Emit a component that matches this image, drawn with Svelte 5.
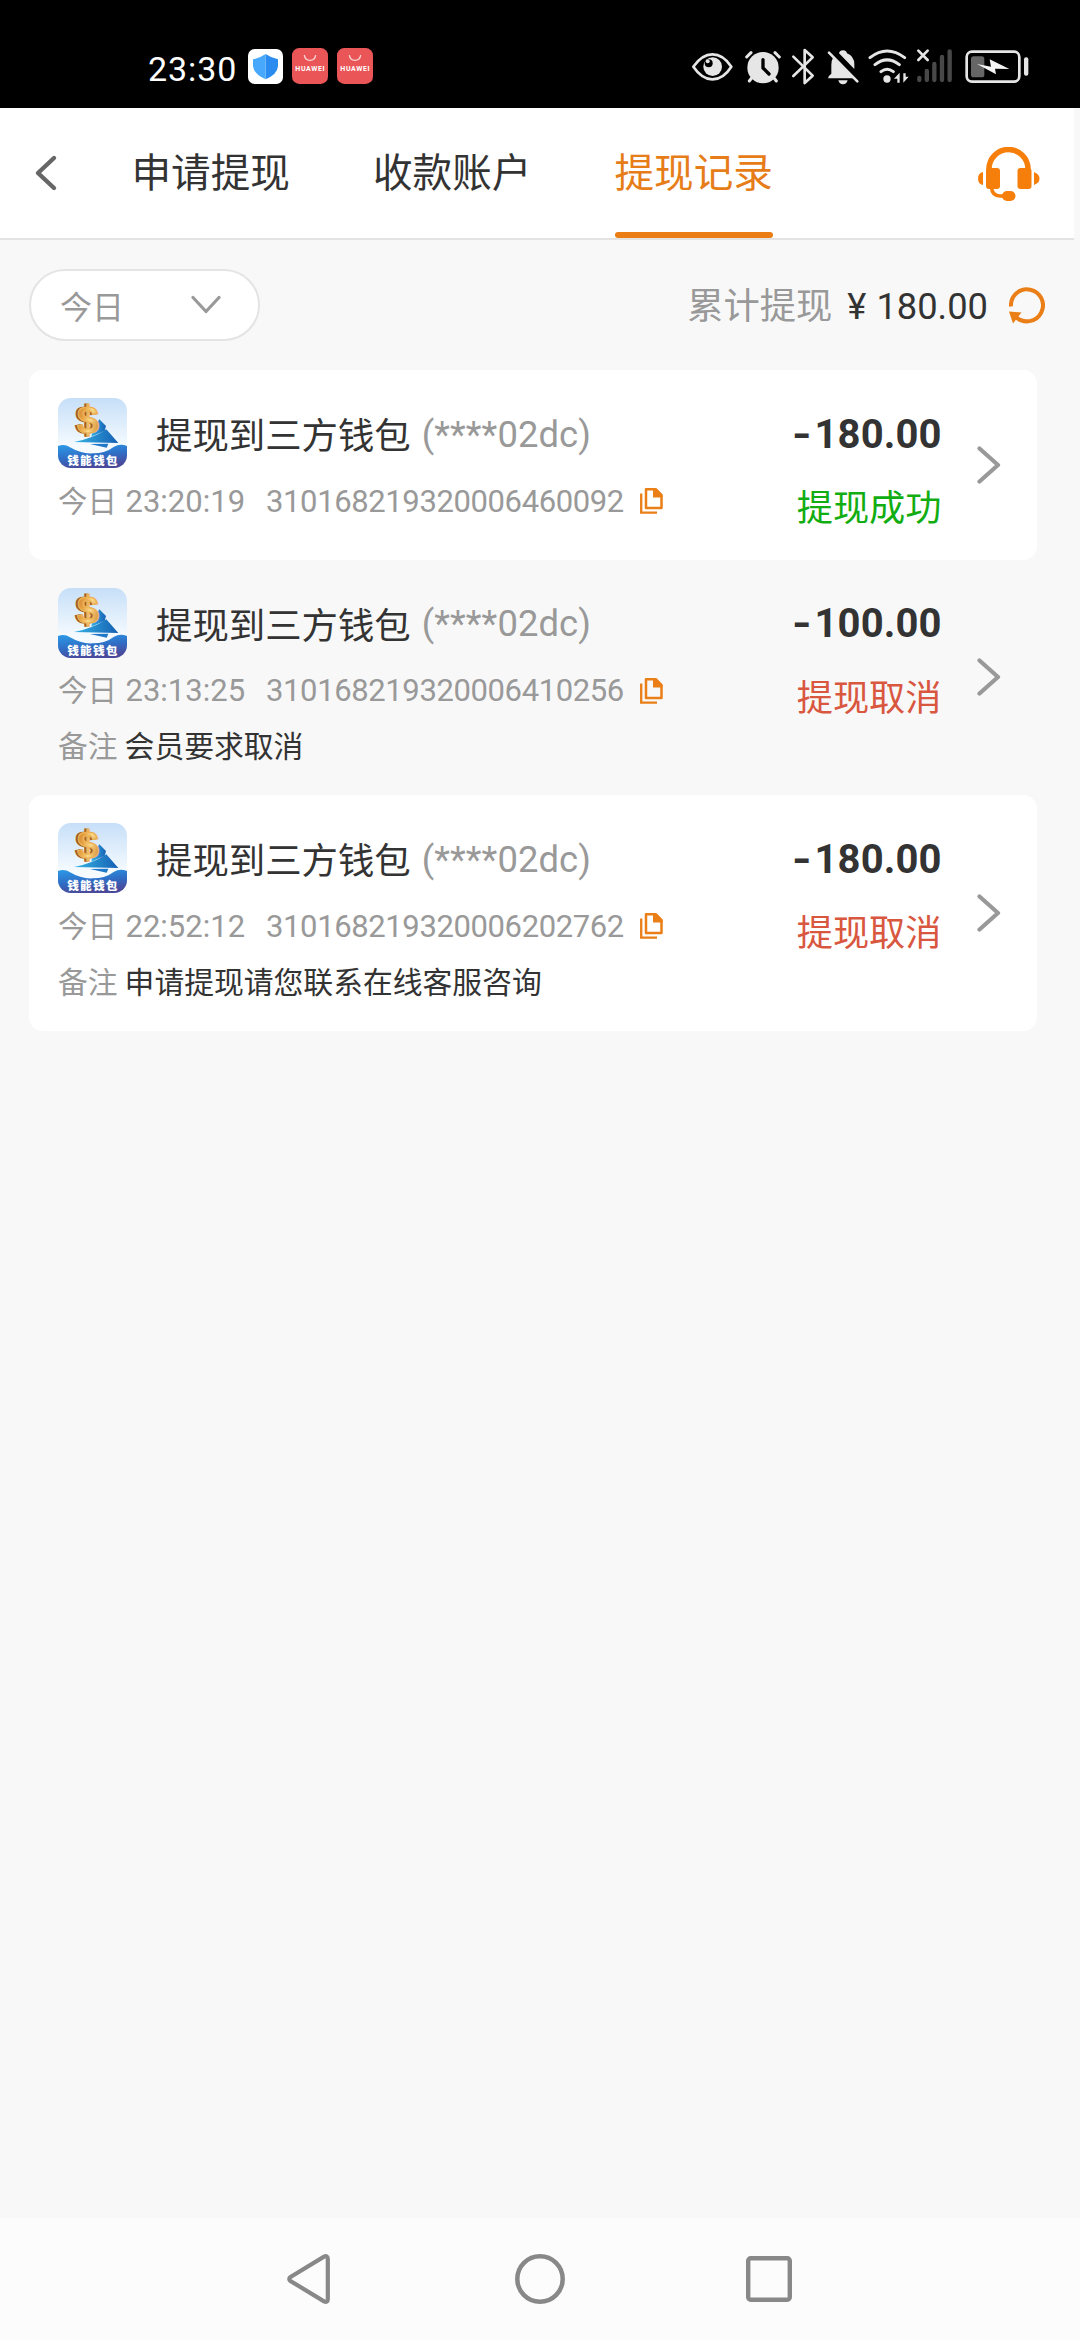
<script>
  const tabs = [
    { label: '申请提现', active: false },
    { label: '收款账户', active: false },
    { label: '提现记录', active: true }
  ];

  const records = [
    { time: '23:20:19', id: '310168219320006460092', amount: '180.00', status: '提现成功', ok: true, note: '' },
    { time: '23:13:25', id: '310168219320006410256', amount: '100.00', status: '提现取消', ok: false, note: '会员要求取消' },
    { time: '22:52:12', id: '310168219320006202762', amount: '180.00', status: '提现取消', ok: false, note: '申请提现请您联系在线客服咨询' }
  ];
</script>

{#snippet walletLogo()}
  <svg class="logo" viewBox="0 0 207 210">
    <defs>
      <linearGradient id="sky" x1="0" y1="0" x2="0" y2="1">
        <stop offset="0" stop-color="#c6dff8" />
        <stop offset="0.7" stop-color="#f6fbff" />
      </linearGradient>
      <linearGradient id="sea" x1="0" y1="0" x2="0.3" y2="1">
        <stop offset="0" stop-color="#2c9be8" />
        <stop offset="0.55" stop-color="#2f6fc6" />
        <stop offset="1" stop-color="#4a4a9c" />
      </linearGradient>
      <linearGradient id="gold" x1="0" y1="0" x2="1" y2="0.4">
        <stop offset="0" stop-color="#c4752e" />
        <stop offset="0.4" stop-color="#e9a544" />
        <stop offset="0.7" stop-color="#fbd98a" />
        <stop offset="1" stop-color="#dfa04a" />
      </linearGradient>
      <linearGradient id="sail" x1="0" y1="0" x2="1" y2="0">
        <stop offset="0" stop-color="#35b4e4" />
        <stop offset="1" stop-color="#1660b4" />
      </linearGradient>
      <clipPath id="round"><rect width="207" height="210" rx="38" /></clipPath>
    </defs>
    <g clip-path="url(#round)">
      <rect width="207" height="210" fill="url(#sky)" />
      <path d="M124 64 L144 84 L140 98 L100 116 L104 96Z" fill="url(#sail)" />
      <text class="dollar dollar-edge" x="51" y="106">$</text>
      <text class="dollar dollar-face" x="57" y="106">$</text>
      <path d="M48 132 Q104 122 145 94 L181 135 Z" fill="url(#sail)" />
      <path d="M96 138 L151 137 L146 149Z" fill="#1f78c8" />
      <path d="M0 144 Q20 136 36 148 Q70 168 104 166 Q142 166 168 146 Q186 136 207 144 V210 H0Z" fill="url(#sea)" />
      <text class="logo-name" x="103" y="200" text-anchor="middle" textLength="150">钱能钱包</text>
    </g>
  </svg>
{/snippet}

{#snippet huawei()}
  <svg class="app" viewBox="0 0 108 108">
    <rect width="108" height="108" rx="22" fill="#ea5658" />
    <path d="M37 21 Q39 37 54 37 Q69 37 71 21" fill="none" stroke="#fbd5d5" stroke-width="4" />
    <text class="hw" x="54" y="70" text-anchor="middle" textLength="88">HUAWEI</text>
  </svg>
{/snippet}

<div class="screen">
  <div class="status">
    <div class="left">
      <span class="clock">23:30</span>
      <svg class="app shield" viewBox="0 0 105 105">
        <rect width="105" height="105" rx="20" fill="#fff" />
        <path d="M53 15 Q70 27 90 31 V52 Q88 76 53 91Z" fill="#2a8cf0" />
        <path d="M53 15 Q36 27 15 31 V52 Q18 76 53 91Z" fill="#48a8fb" />
      </svg>
      {@render huawei()}
      {@render huawei()}
    </div>
    <div class="indicators">
      <svg class="w-eye" viewBox="30 50 146 120">
        <path d="M40 109 Q66 72 97 72 Q130 72 154 109 Q130 147 97 147 Q66 147 40 109Z" fill="none" stroke="#e6e6e6" stroke-width="8" stroke-linejoin="round" />
        <circle cx="98" cy="109" r="28" fill="#e6e6e6" />
        <circle cx="86" cy="99" r="12" fill="#000" />
        <circle cx="83" cy="93" r="6" fill="#e6e6e6" />
      </svg>
      <svg class="w-alarm" viewBox="176 50 142 120">
        <circle cx="248" cy="112" r="47" fill="#e6e6e6" />
        <g stroke="#e6e6e6" stroke-width="9" stroke-linecap="round">
          <path d="M199 80 L212 67 M297 80 L284 67 M214 143 L207 152 M281 143 L288 152" />
        </g>
        <path d="M248 88 V113 L266 131" fill="none" stroke="#000" stroke-width="10" stroke-linecap="round" stroke-linejoin="round" />
      </svg>
      <svg class="w-bt" viewBox="318 50 104 120">
        <path d="M340 79 L398 136 L374 158 V59 L398 81 L340 137" fill="none" stroke="#e6e6e6" stroke-width="8" stroke-linecap="round" stroke-linejoin="round" />
      </svg>
      <svg class="w-bell" viewBox="422 50 128 120">
        <path d="M458 82 L520 144 H443 Q443 137 453 130 V104 Q453 90 458 82Z M476 69 Q478 60 488 60 Q498 60 500 69 Q522 78 522 102 V116Z M474 150 H502 Q499 162 488 162 Q477 162 474 150Z" fill="#e6e6e6" />
        <path d="M446 67 L531 153" stroke="#e6e6e6" stroke-width="8" stroke-linecap="round" />
      </svg>
      <svg class="w-wifi" viewBox="550 50 146 120">
        <g fill="none" stroke="#e6e6e6" stroke-width="9" stroke-linecap="round">
          <path d="M571 82 Q622 42 675 82 M586 103 Q622 74 659 103 M604 124 Q622 110 641 124" />
        </g>
        <circle cx="622" cy="146" r="11" fill="#e6e6e6" />
        <path d="M643 145 L660 127 V157 H653 V145Z M687 139 L671 157 V129 H678 V139Z" fill="#e6e6e6" />
      </svg>
      <svg class="w-sig" viewBox="696 50 140 120">
        <path d="M718 143 V149 M740.500 122 V149 M763 101 V149 M786 80 V149 M809 63 V149" stroke="#484848" stroke-width="13" stroke-linecap="round" />
        <path d="M715 61 L743 89 M743 61 L715 89" stroke="#e6e6e6" stroke-width="8" stroke-linecap="round" />
      </svg>
      <svg class="w-bat" viewBox="836 50 214 120">
        <rect x="859" y="64" width="158" height="90" rx="16" fill="none" stroke="#e6e6e6" stroke-width="8" />
        <rect x="872" y="78" width="40" height="63" rx="8" fill="#666" />
        <path d="M890 101 L932 109 L928 87 L987 116 L944 115 L947 132Z" fill="#f4f4f4" />
        <rect x="1031" y="81" width="13" height="55" rx="6" fill="#e6e6e6" />
      </svg>
    </div>
  </div>

  <main>
    <header>
      <svg class="back" viewBox="0 0 24 38"><path d="M20 4 L4 19 L20 34" fill="none" stroke="#666" stroke-width="4.400" stroke-linecap="round" stroke-linejoin="round" /></svg>
      <nav>
        {#each tabs as tab}
          <div class="tab" class:active={tab.active}>{tab.label}</div>
        {/each}
      </nav>
      <svg class="headset" viewBox="0 0 62 54">
        <path d="M11 24 V22 A19.500 19.500 0 0 1 50 22 V24" fill="none" stroke="#f57f0a" stroke-width="5.500" />
        <rect x="8" y="21" width="14" height="21" rx="3" fill="#f57f0a" />
        <rect x="39.500" y="21" width="14" height="21" rx="3" fill="#f57f0a" />
        <path d="M5 25 V38 Q0 37 0 31.500 Q0 26 5 25Z M56 25 V38 Q61.500 36 61.500 31.500 Q61.500 27 56 25Z" fill="#f57f0a" />
        <path d="M13.500 40 Q14 49 22 49 H28" fill="none" stroke="#f57f0a" stroke-width="3.600" />
        <rect x="24" y="44" width="13.500" height="10" rx="5" fill="#f57f0a" />
      </svg>
    </header>

    <section class="filter">
      <div class="pill">
        <span>今日</span>
        <svg viewBox="0 0 30 20"><path d="M2 2.500 L15 16.500 L28 2.500" fill="none" stroke="#999" stroke-width="3.200" stroke-linecap="round" stroke-linejoin="round" /></svg>
      </div>
      <div class="total">
        <span class="label">累计提现</span>
        <span class="yen">¥</span>
        <span class="sum">180.00</span>
        <svg viewBox="0 0 36 37">
          <path d="M2 19.500 A16 16 0 1 1 7 30" fill="none" stroke="#ea7f17" stroke-width="4" />
          <path d="M0 24.500 L12.500 25.500 L4 36.500Z" fill="#ea7f17" />
        </svg>
      </div>
    </section>

    <section class="list">
      {#each records as r, i}
        <article class="card" class:plain={i % 2 === 1}>
          <div class="info">
            <div class="title">
              {@render walletLogo()}
              <span class="name">提现到三方钱包</span>
              <span class="tail">(****02dc)</span>
            </div>
            <div class="meta">
              <span class="day">今日</span>
              <span class="time">{r.time}</span>
              <span class="id">{r.id}</span>
              <svg viewBox="0 0 23 26">
                <path d="M6 1.300 H16 L21.500 7 V20 H6Z" fill="none" stroke="#ea7f17" stroke-width="2.500" stroke-linejoin="round" />
                <path d="M13 1 H16.500 L22.500 7 V9.500 H13Z" fill="#ea7f17" />
                <path d="M1.200 5.500 V24.700 H17" fill="none" stroke="#ea7f17" stroke-width="2.300" />
              </svg>
            </div>
            {#if r.note}
              <div class="note"><span>备注</span><span class="reason">{r.note}</span></div>
            {/if}
          </div>
          <div class="result">
            <div class="amount"><span class="minus">-</span>{r.amount}</div>
            <div class="state" class:ok={r.ok}>{r.status}</div>
          </div>
          <svg class="go" viewBox="0 0 24 38"><path d="M2.500 2.500 L21 19 L2.500 35.500" fill="none" stroke="#999" stroke-width="4.200" stroke-linecap="round" stroke-linejoin="round" /></svg>
        </article>
      {/each}
    </section>
  </main>

  <footer>
    <svg class="tri" viewBox="0 0 43 50"><path d="M3.500 23 L37 2.700 Q40.800 1 40.800 5 V45 Q40.800 49 37 47.300 L3.500 27 Q1 25 3.500 23Z" fill="none" stroke="#888" stroke-width="4.200" /></svg>
    <svg class="circ" viewBox="0 0 50 50"><circle cx="25" cy="25" r="22.700" fill="none" stroke="#888" stroke-width="4.500" /></svg>
    <svg class="sq" viewBox="0 0 46 46"><rect x="2.200" y="2.200" width="41.600" height="41.600" rx="2.500" fill="none" stroke="#888" stroke-width="4.400" /></svg>
  </footer>
</div>

<style>
  :global(body) {
    margin: 0;
    background: #f8f8f8;
  }
  .screen {
    width: 1080px;
    height: 2340px;
    display: flex;
    flex-direction: column;
    overflow: hidden;
    background: #f8f8f8;
    color: #333;
    font-family: Roboto, 'Noto Sans CJK SC', sans-serif;
    white-space: nowrap;
  }
  svg {
    display: block;
    flex: none;
  }
  .status {
    height: 108px;
    box-sizing: border-box;
    padding: 0 50px 0 148px;
    background: #000;
    display: flex;
    justify-content: space-between;
  }
  .left {
    display: flex;
    align-items: flex-start;
    padding-top: 48px;
    gap: 9px;
  }
  .clock {
    width: 91px;
    color: #fff;
    font-size: 34px;
    line-height: 42px;
    letter-spacing: 0.9px;
  }
  .app {
    width: 36px;
    height: 36px;
  }
  .shield {
    width: 35px;
    height: 35px;
    margin-top: 1px;
  }
  .hw {
    fill: #fff;
    font-size: 21px;
    font-weight: 700;
  }
  .indicators {
    display: flex;
    padding-top: 46.67px;
  }
  .indicators svg {
    height: 40px;
  }
  .w-eye, .w-wifi { width: 48.67px; }
  .w-alarm { width: 47.33px; }
  .w-bt { width: 34.67px; }
  .w-bell { width: 42.67px; }
  .w-sig { width: 46.67px; }
  .w-bat { width: 71.33px; }

  main {
    width: 1074px;
    flex: 1;
  }
  header {
    height: 132px;
    box-sizing: border-box;
    border-bottom: 2px solid #e3e3e3;
    background: #fff;
    display: flex;
    padding: 0 34px 0 34px;
  }
  .back {
    width: 24px;
    height: 38px;
    margin-top: 45.5px;
  }
  nav {
    display: flex;
    gap: 83.5px;
    margin-left: 73.5px;
    flex: 1;
  }
  .tab {
    width: 158px;
    box-sizing: border-box;
    font-size: 39.6px;
    line-height: 131px;
    height: 130px;
    position: relative;
  }
  .active {
    color: #e67d18;
  }
  .active::after {
    content: '';
    position: absolute;
    left: 0;
    bottom: 0;
    width: 158px;
    height: 6px;
    border-radius: 3px;
    background: #ea7d14;
  }
  .headset {
    width: 62px;
    height: 54px;
    margin-top: 38.7px;
  }

  .filter {
    display: flex;
    justify-content: space-between;
    align-items: center;
    height: 72px;
    padding: 29px 29px 29px 29px;
  }
  .pill {
    width: 231px;
    height: 72px;
    box-sizing: border-box;
    border: 2px solid #e4e4e4;
    border-radius: 36px;
    background: #fff;
    display: flex;
    align-items: center;
    justify-content: space-between;
    padding: 0 37px 0 29px;
    font-size: 32px;
    color: #999;
  }
  .pill svg {
    width: 30px;
    height: 20px;
  }
  .total {
    display: flex;
    align-items: center;
    font-size: 36.3px;
    line-height: 72px;
  }
  .total span {
    padding-top: 4px;
  }
  .label {
    color: #999;
    margin-right: 15px;
  }
  .yen {
    margin-right: 10px;
  }
  .sum {
    margin-right: 21px;
  }
  .total svg {
    width: 36px;
    height: 37px;
  }

  .list {
    width: 1008.5px;
    margin-left: 28.5px;
  }
  .card {
    display: flex;
    min-height: 189.5px;
    border-radius: 14px;
    background: #fff;
  }
  .plain {
    background: none;
  }
  .info {
    flex: 1;
    padding: 28px 0 26px 29.5px;
  }
  .title {
    display: flex;
    align-items: center;
    height: 70px;
    font-size: 36.4px;
  }
  .logo {
    width: 69px;
    height: 70px;
    margin-right: 29px;
  }
  .dollar {
    font: 700 118px 'Liberation Sans', sans-serif;
    stroke-width: 4px;
  }
  .dollar-edge {
    fill: #a65a22;
    stroke: #a65a22;
  }
  .dollar-face {
    fill: url(#gold);
    stroke: #eab254;
  }
  .logo-name {
    font: 900 35px 'Noto Sans CJK SC', sans-serif;
    fill: #fff;
  }
  .name {
    margin-right: 11px;
  }
  .tail {
    color: #999;
    padding-top: 2px;
    letter-spacing: 0.1px;
  }
  .meta {
    display: flex;
    align-items: center;
    margin-top: 10px;
    font-size: 31px;
    line-height: 46px;
    height: 46px;
    color: #999;
  }
  .meta span {
    padding-top: 1.5px;
  }
  .day {
    font-size: 29.4px;
    width: 67.5px;
  }
  .time {
    width: 140.5px;
  }
  .id {
    width: 374px;
    letter-spacing: -0.38px;
  }
  .meta svg {
    width: 23px;
    height: 26px;
  }
  .note {
    display: flex;
    margin-top: 11.5px;
    height: 44px;
    line-height: 44px;
    font-size: 29.8px;
    color: #999;
  }
  .reason {
    margin-left: 7px;
    color: #333;
  }
  .result {
    padding-top: 28.5px;
    text-align: right;
    margin-right: 35px;
  }
  .amount {
    font-size: 40px;
    font-weight: 700;
    line-height: 71px;
    letter-spacing: 0.1px;
  }
  .minus {
    display: inline-block;
    transform: scaleX(1.25);
    transform-origin: right;
    margin-right: 3px;
  }
  .state {
    margin-top: 9.5px;
    font-size: 36.2px;
    line-height: 60px;
    color: #d9573f;
  }
  .ok {
    color: #12ad12;
  }
  .go {
    width: 24px;
    height: 38px;
    align-self: center;
    margin-right: 36.5px;
  }

  footer {
    height: 122px;
    background: #fcfcfc;
    display: flex;
    align-items: center;
  }
  .tri {
    width: 43px;
    height: 50px;
    margin-left: 287px;
  }
  .circ {
    width: 50px;
    height: 50px;
    margin-left: 185px;
  }
  .sq {
    width: 46px;
    height: 46px;
    margin-left: 181px;
  }
</style>
